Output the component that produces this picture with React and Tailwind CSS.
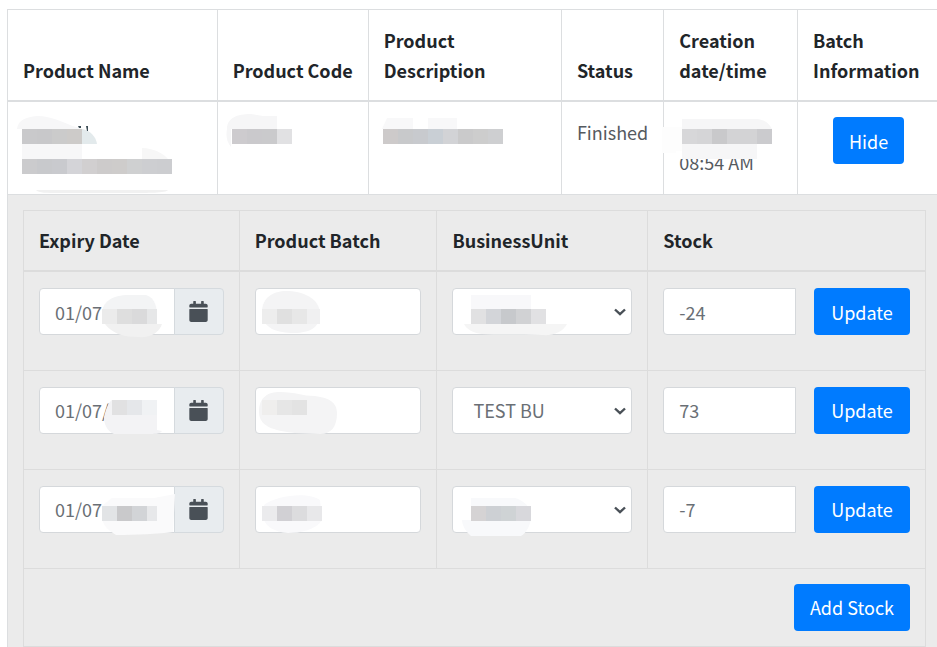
import React, { useState } from 'react';
import { FaCalendar } from 'react-icons/fa';

const BATCHES = [
    {
        id: 1,
        expiry: '01/07',
        batch: '',
        unit: '',
        stock: '-24',
        expiryMask: {
            haze: [
                { d: 'M78 42 C78 30 88 23 105 23 L122 23 C132 26 133 37 133 45 L133 52 L78 52 Z', fill: '#f3f4f5' },
                { d: 'M81 52 L138 52 C135 61 126 66 114 65 C98 65 88 61 81 52 Z', fill: '#f1f1f1' },
            ],
            x: 78,
            y: 37,
            blocks: ['#ebebeb', '#dedede', '#dadadb', '#e6e7e8'],
            last: 133,
        },
        batchMask: {
            haze: [{ d: 'M22 40 C22 25 34 19 46 19 C62 19 80 26 80 42 C80 55 70 61 54 61 C38 61 22 57 22 40 Z', fill: '#f4f4f5' }],
            x: 22,
            y: 37,
            blocks: ['#ededed', '#e0e0e0', '#e7e7e7', '#f0f0f1'],
            last: 80,
        },
        unitMask: {
            haze: [
                { d: 'M34 23 H94 V37 H34 Z', fill: '#f8f8fa' },
                { d: 'M27 52 H130 C126 60 116 64 105 63 C80 62 58 63 45 62 C36 61 29 57 27 52 Z', fill: '#f5f5f5' },
            ],
            x: 34,
            y: 37,
            blocks: ['#e1e1e2', '#d3d5d9', '#c7c9cc', '#d1d2d4', '#e1e1e3'],
        },
    },
    {
        id: 2,
        expiry: '01/07/',
        batch: '',
        unit: 'TEST BU',
        stock: '73',
        expiryMask: {
            haze: [{ d: 'M88 29 H133 V59 L138 60 C136 63 130 63 124 63 L90 63 C83 60 80 53 80 46 C82 38 84 32 88 29 Z', fill: '#f3f3f5' }],
            x: 88,
            y: 29,
            blocks: ['#e1e1e2', '#e5e7ea', '#f0f2f4'],
        },
        batchMask: {
            haze: [{ d: 'M19 41 C19 26 28 21 40 21 C56 21 62 25 75 25 C90 27 97 32 97 42 C97 55 92 63 80 63 L55 62 C40 60 19 58 19 41 Z', fill: '#f4f4f5' }],
            x: 22,
            y: 29,
            blocks: ['#efeeed', '#e6e6e6', '#e3e3e3'],
        },
    },
    {
        id: 3,
        expiry: '01/07',
        batch: '',
        unit: '',
        stock: '-7',
        expiryMask: {
            haze: [{ d: 'M78 36 L88 28 H130 L151 24 L149 62 C135 64 110 65 92 65 C84 60 78 55 78 46 Z', fill: '#fafafb' }],
            x: 78,
            y: 36,
            blocks: ['#e2e4e6', '#c9c9cb', '#d2d4d7', '#e7e8ea'],
            last: 133,
        },
        batchMask: {
            haze: [{ d: 'M24 35 C38 24 70 22 80 30 L82 50 C76 60 60 63 48 63 C34 62 26 56 24 50 Z', fill: '#f9f9fb' }],
            x: 22,
            y: 36,
            blocks: ['#ebebed', '#d1d0d4', '#dcdcde', '#e8e8ea'],
        },
        unitMask: {
            haze: [{ d: 'M34 28 H78 C86 30 92 36 94 42 C95 52 91 62 84 66 H34 C29 62 25 55 25 50 H34 Z', fill: '#f8f9fb' }],
            x: 34,
            y: 36,
            blocks: ['#d5d3d4', '#cdd0d4', '#cfd3d5', '#d8d8dc'],
        },
    },
];

const NAME_MASK = {
    haze: [
        { d: 'M9 27 C10 18 18 15 29 14 C45 14 55 21 68 25 C80 28 88 33 89 42 H74 V57 H14 V27 Z', fill: '#f7f7f8' },
        { d: 'M74 27 C82 28 88 35 89 42 H74 Z', fill: '#e3eaec' },
        { d: 'M134 46 C145 46 155 51 160 57 H134 Z', fill: '#f7f7f7' },
        { d: 'M28 88 H160 C158 91 140 91 120 91 H50 C40 91 30 91 28 88 Z', fill: '#f1f1f1' },
        { d: 'M70 24 H73 V26 L71 26 Z M78 24 H80 V29 H79 Z', fill: '#3c4c55' },
    ],
    x: 14,
    y: 27,
    blocks: ['#c9c9cb', '#c8c8ca', '#cbcbcb', '#cdcbc9'],
};

const NAME_MASK_LINE = {
    haze: [],
    x: 14,
    y: 57,
    blocks: ['#cbcbcd', '#c8c9cc', '#c9cace', '#d4d4d8', '#d1cfd0', '#cdcbcb', '#cecccb', '#cfd0d1', '#cdced1', '#cccdd0'],
};

const CODE_MASK = {
    haze: [{ d: 'M9 27 C9 16 19 12 33 12 L45 14 H59 V27 H13 V45 C8 39 8 33 9 27 Z', fill: '#f6f6f7' }],
    x: 14,
    y: 27,
    blocks: ['#cdcbce', '#cac9cc', '#cacacc', '#e1e1e3'],
};

const DESCRIPTION_MASK = {
    haze: [{ d: 'M13 27 L18 16 H44 V27 Z M59 27 V16 H88 V27 Z', fill: '#f8f8f9' }],
    x: 14,
    y: 27,
    blocks: ['#cdcaca', '#c8c9cb', '#c8cace', '#c9cfd5', '#d2d3d6', '#cacacb', '#cdcdcd', '#cecfd1'],
};

const CREATED_MASK = {
    haze: [
        { d: 'M-2 25 H18 V51 H-2 Z', fill: '#fdfdfd' },
        { d: 'M12 49 H92 V57 H12 Z', fill: '#ffffff' },
        { d: 'M18 17 H93 C102 18 106 23 108 27 V42 H93 V57 H18 Z', fill: '#f6f6f7' },
    ],
    x: 18,
    y: 27,
    blocks: ['#d7d7d9', '#d5d5d7', '#c9c9cb', '#d3d3d5', '#d3d3d5', '#cbcbce'],
};

// pixelated patch that hides private values
function Mask({ mask }) {
    const { haze, x, y, blocks, last } = mask;
    return (
        <svg className="pointer-events-none absolute top-0 left-0 overflow-visible" width="1" height="1" aria-hidden="true">
            {haze.map((shape) => <path key={shape.d} d={shape.d} fill={shape.fill} />)}
            {blocks.map((fill, i) => {
                const left = x + i * 15;
                const width = last ? Math.min(15, last - left) : 15;
                return <rect key={left} x={left} y={y} width={width} height="15" fill={fill} shapeRendering="crispEdges" />
            })}
        </svg>
    )
}

function BatchRow({ row }) {
    const [expiry, setExpiry] = useState(row.expiry);
    const [batch, setBatch] = useState(row.batch);
    const [unit, setUnit] = useState(row.unit);
    const [stock, setStock] = useState(row.stock);

    return (
        <tr className="h-[99px]">
            <td className="relative border border-[#dcdcdc] px-[15px] pt-4 align-top">
                <div className="flex h-[47px]">
                    <input
                        aria-label="Expiry Date"
                        value={expiry}
                        onChange={(e) => setExpiry(e.target.value)}
                        className="w-0 min-w-0 flex-1 rounded-l border border-[#d5d8db] bg-white px-[15px] text-[#6a6f75]"
                    />
                    <button
                        type="button"
                        aria-label="Open calendar"
                        className="-ml-px flex w-[50px] items-center justify-center rounded-r border border-[#d5dade] bg-[#e8ecef] text-[#495057]"
                    >
                        <FaCalendar size={21} />
                    </button>
                </div>
                <Mask mask={row.expiryMask} />
            </td>
            <td className="relative border border-[#dcdcdc] px-[15px] pt-4 align-top">
                <input
                    aria-label="Product Batch"
                    value={batch}
                    onChange={(e) => setBatch(e.target.value)}
                    className="block h-[47px] w-full min-w-0 rounded border border-[#d5d8db] bg-white px-[15px] text-[#6a6f75]"
                />
                <Mask mask={row.batchMask} />
            </td>
            <td className="relative border border-[#dcdcdc] px-[15px] pt-4 align-top">
                <div className="relative">
                    <select
                        aria-label="Business Unit"
                        value={unit}
                        onChange={(e) => setUnit(e.target.value)}
                        className="block h-[47px] w-full appearance-none rounded border border-[#d5d8db] bg-white px-5 text-[#6a6f75]"
                    >
                        <option value=""></option>
                        <option value="TEST BU">TEST BU</option>
                    </select>
                    <svg className="pointer-events-none absolute top-5 right-[6px]" width="12" height="8" viewBox="0 0 12 8" fill="none" aria-hidden="true">
                        <path d="M1 1.5 L6 6.2 L11 1.5" stroke="#495057" strokeWidth="2.4" />
                    </svg>
                </div>
                {row.unitMask && <Mask mask={row.unitMask} />}
            </td>
            <td className="border border-[#dcdcdc] px-[15px] pt-4 align-top">
                <div className="flex h-[47px] gap-[18px]">
                    <input
                        aria-label="Stock"
                        value={stock}
                        onChange={(e) => setStock(e.target.value)}
                        className="w-0 min-w-0 flex-1 rounded-l border border-[#d5d8db] bg-white px-[15px] text-[#6a6f75]"
                    />
                    <button type="button" className="w-24 rounded bg-[#007bff] text-white">Update</button>
                </div>
            </td>
        </tr>
    )
}

function BatchTable() {
    return (
        <table className="w-full border-collapse border border-[#dcdcdc] text-left">
            <thead>
                <tr className="h-[61px] text-[#212529]">
                    <th className="w-[216px] border border-b-2 border-[#dcdcdc] px-[15px]">Expiry Date</th>
                    <th className="w-[198px] border border-b-2 border-[#dcdcdc] px-[15px]">Product Batch</th>
                    <th className="w-[211px] border border-b-2 border-[#dcdcdc] px-[15px]">BusinessUnit</th>
                    <th className="w-[278px] border border-b-2 border-[#dcdcdc] px-[15px]">Stock</th>
                </tr>
            </thead>
            <tbody>
                {BATCHES.map((row) => <BatchRow key={row.id} row={row} />)}
                <tr>
                    <td colSpan={4} className="border border-[#dcdcdc] px-[15px] py-[15px] text-right">
                        <button type="button" className="h-[47px] rounded bg-[#007bff] px-4 align-top text-white">Add Stock</button>
                    </td>
                </tr>
            </tbody>
        </table>
    )
}

function App() {
    const [open, setOpen] = useState(true);

    return (
        <div className="overflow-hidden bg-white pt-[9px] pl-[7px] font-['Noto_Sans_CJK_SC','Noto_Sans',sans-serif] text-[18px] leading-[30px]">
            <div className="-mr-[5px]">
                <table className="w-full border-collapse border border-[#dee2e6] text-left">
                    <thead>
                        <tr className="align-bottom text-[#212529]">
                            <th className="w-[211px] border border-b-2 border-[#dcdee0] px-[15px] py-[15px]">Product Name</th>
                            <th className="w-[150px] border border-b-2 border-[#dcdee0] px-[15px] py-[15px] whitespace-nowrap">Product Code</th>
                            <th className="w-[194px] border border-b-2 border-[#dcdee0] px-[15px] py-[15px]">Product<br />Description</th>
                            <th className="w-[102px] border border-b-2 border-[#dcdee0] px-[15px] py-[15px]">Status</th>
                            <th className="w-[134px] border border-b-2 border-[#dcdee0] px-[15px] py-[15px]">Creation date/time</th>
                            <th className="w-[144px] border border-b-2 border-[#dcdee0] px-[15px] py-[15px]">Batch Information</th>
                        </tr>
                    </thead>
                    <tbody>
                        <tr className="h-[93px] align-top text-[#555a5f]">
                            <td className="relative border border-[#dcdee0]">
                                <Mask mask={NAME_MASK} />
                                <Mask mask={NAME_MASK_LINE} />
                            </td>
                            <td className="relative border border-[#dcdee0]">
                                <Mask mask={CODE_MASK} />
                            </td>
                            <td className="relative border border-[#dcdee0]">
                                <Mask mask={DESCRIPTION_MASK} />
                            </td>
                            <td className="border border-[#dcdee0] px-[15px] py-[15px]">Finished</td>
                            <td className="relative border border-[#dcdee0] px-[15px] py-[15px] whitespace-nowrap">
                                <br />
                                08:54 AM
                                <Mask mask={CREATED_MASK} />
                            </td>
                            <td className="border border-[#dcdee0] px-[15px] py-[15px]">
                                <button
                                    type="button"
                                    onClick={() => setOpen(!open)}
                                    className="ml-5 h-[47px] w-[71px] rounded bg-[#007bff] align-top text-white"
                                >
                                    {open ? 'Hide' : 'Show'}
                                </button>
                            </td>
                        </tr>
                        {open && <tr>
                            <td colSpan={6} className="border border-[#dcdee0] bg-[#ebebeb] p-[15px]">
                                <BatchTable />
                            </td>
                        </tr>}
                    </tbody>
                </table>
            </div>
        </div>
    )
}

export default App
